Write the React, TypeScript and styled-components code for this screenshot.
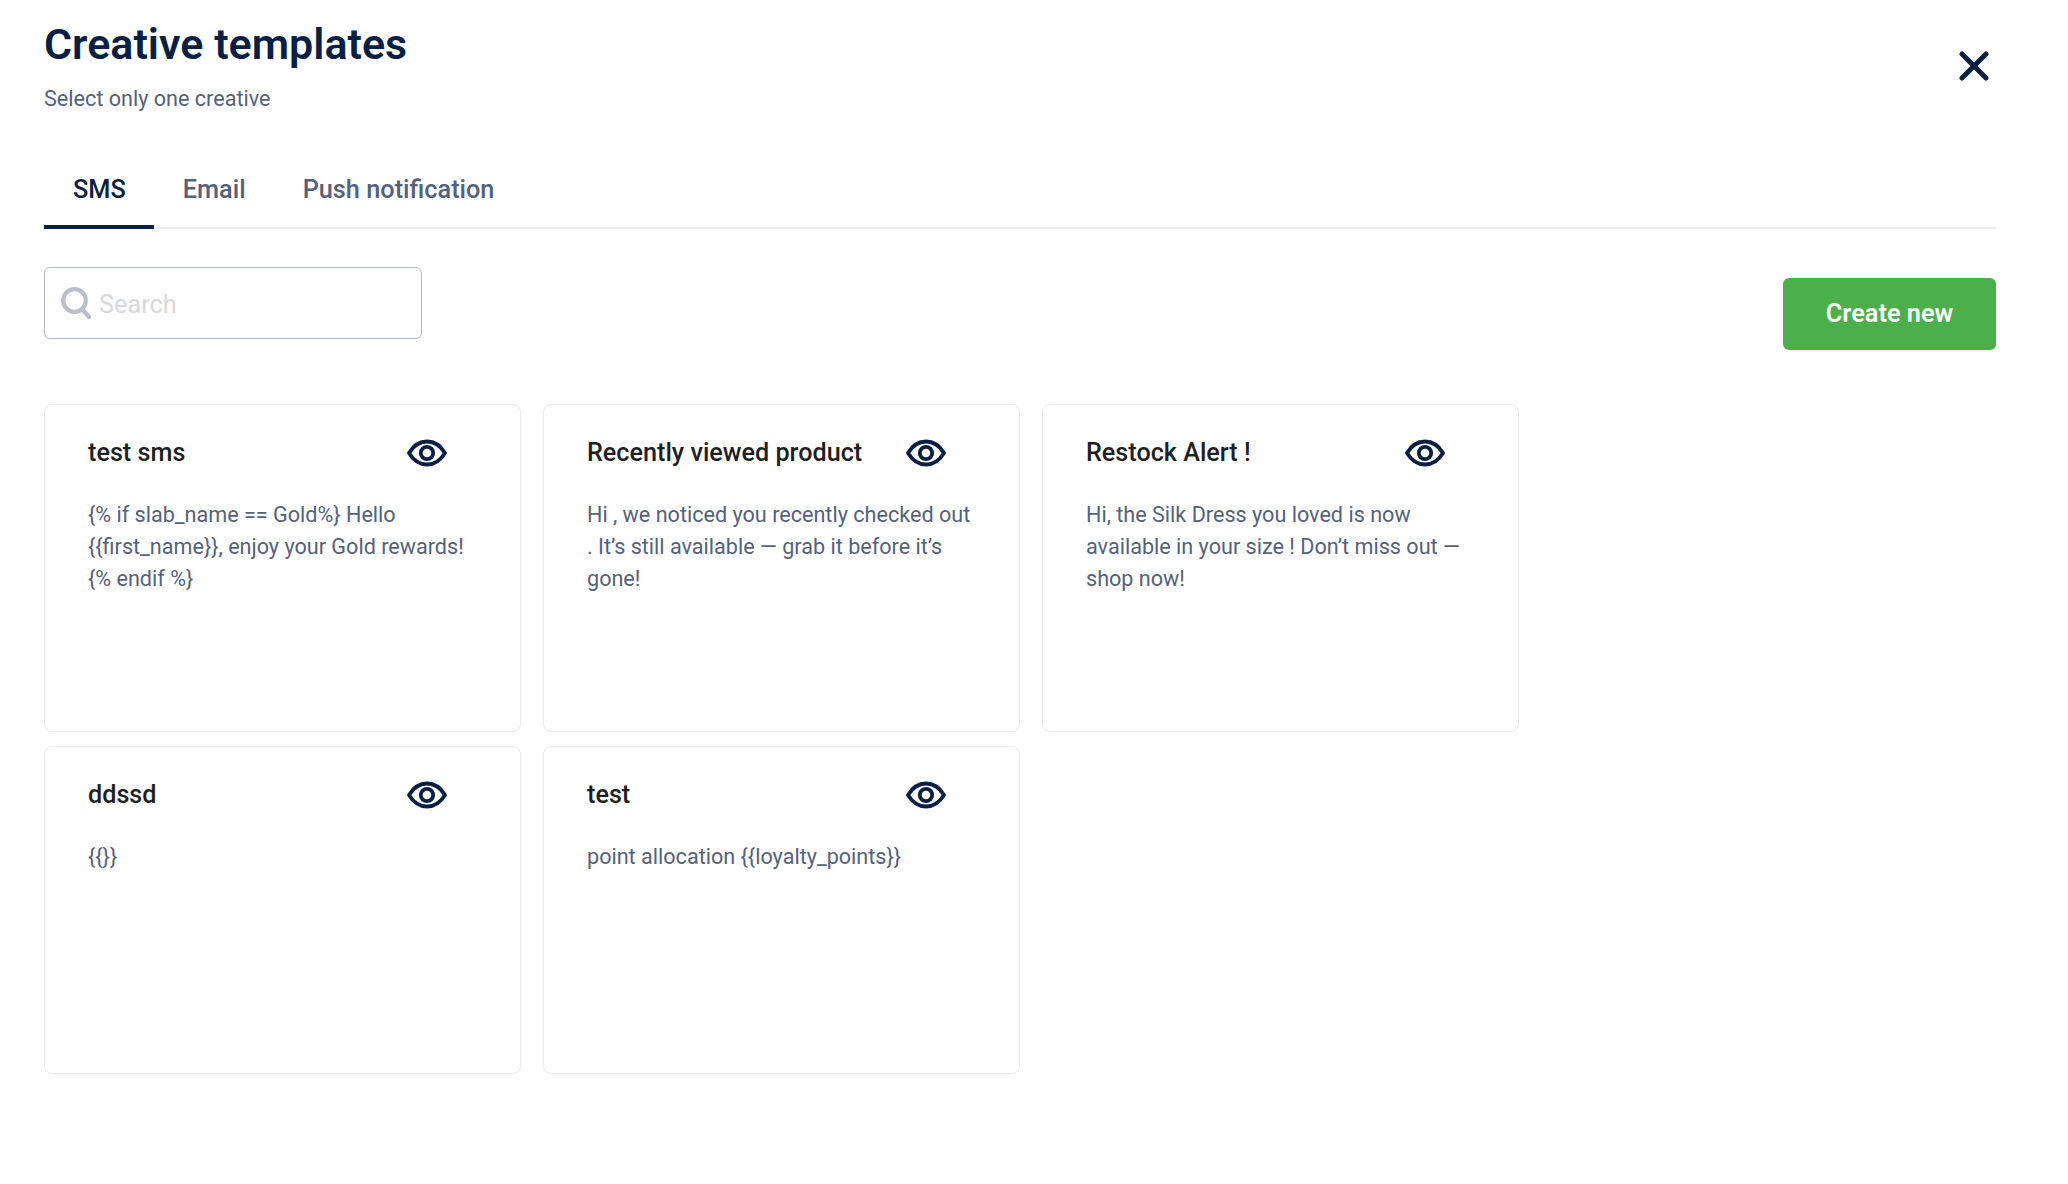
import { useState } from 'react';
import styled, { createGlobalStyle } from 'styled-components';

const GlobalStyle = createGlobalStyle`
  html, body {
    margin: 0;
    background: #fff;
    font-family: Roboto, "Noto Sans", sans-serif;
  }
`;

const Page = styled.div`
  width: 2068px;
  height: 1184px;
  box-sizing: border-box;
  padding: 17px 72px 0 44px;
  overflow: hidden;
`;

const Header = styled.div`
  display: flex;
  justify-content: space-between;
  align-items: flex-start;
`;

const Title = styled.h1`
  margin: 0;
  font-size: 43px;
  line-height: 54px;
  font-weight: 600;
  color: #0a1f44;
`;

const Subtitle = styled.p`
  margin: 15px 0 0;
  font-size: 21.6px;
  line-height: 26px;
  color: #53627c;
`;

const CloseButton = styled.button`
  display: flex;
  margin: 34px 7px 0 0;
  padding: 0;
  border: none;
  background: none;
  color: #0a1f44;
`;

const TabBar = styled.div`
  display: flex;
  margin-top: 46px;
  border-bottom: 2px solid #eceef0;
`;

const Tab = styled.button<{ $active?: boolean }>`
  padding: 17px 28px 20px 29px;
  margin-bottom: -2px;
  border: none;
  border-bottom: 4px solid ${({ $active }) => ($active ? '#0a1f44' : 'transparent')};
  background: none;
  font-family: inherit;
  font-size: 25.3px;
  line-height: 30px;
  font-weight: 500;
  color: ${({ $active }) => ($active ? '#0a1f44' : '#53627c')};
`;

const Toolbar = styled.div`
  display: flex;
  justify-content: space-between;
  align-items: flex-start;
  margin-top: 38px;
`;

const SearchBox = styled.label`
  display: flex;
  align-items: center;
  gap: 8px;
  width: 378px;
  height: 72px;
  box-sizing: border-box;
  padding: 0 16px;
  border: 1px solid #b0b7c6;
  border-radius: 6px;
  color: #b8bfcc;
`;

const SearchInput = styled.input`
  flex: 1;
  min-width: 0;
  border: none;
  outline: none;
  padding: 2px 0 0;
  font-family: inherit;
  font-size: 25.3px;
  color: #0a1f44;

  &::placeholder {
    color: #d6d8dc;
    opacity: 1;
  }
`;

const CreateButton = styled.button`
  width: 213px;
  height: 72px;
  margin-top: 11px;
  padding: 0 0 1px;
  border: none;
  border-radius: 6px;
  background: #4bb04a;
  color: #fff;
  font-family: inherit;
  font-size: 25.3px;
  font-weight: 600;
`;

const CardGrid = styled.div`
  display: grid;
  grid-template-columns: repeat(3, 477px);
  grid-auto-rows: 328px;
  column-gap: 22px;
  row-gap: 14px;
  margin-top: 54px;
`;

const Card = styled.div`
  box-sizing: border-box;
  padding: 30px 43px;
  border: 1px solid #e8eaed;
  border-radius: 8px;
`;

const CardHead = styled.div`
  display: flex;
  justify-content: space-between;
  align-items: center;
  height: 36px;
  padding-right: 30px;
`;

const CardTitle = styled.h3`
  margin: 0;
  font-size: 25.2px;
  line-height: 36px;
  font-weight: 500;
  color: #1d1f24;
`;

const EyeButton = styled.button`
  display: flex;
  padding: 0;
  border: none;
  background: none;
  color: #0a1f44;
`;

const CardBody = styled.p`
  margin: 28px 0 0;
  font-size: 21.6px;
  line-height: 32px;
  color: #53627c;
`;

const EyeIcon = () => (
  <svg width="40" height="28" viewBox="0 0 40 28" fill="none" stroke="currentColor" strokeWidth="3.8" strokeLinejoin="round">
    <path d="M2 14C6.5 6.5 12.5 2.5 20 2.5S33.5 6.5 38 14C33.5 21.5 27.5 25.5 20 25.5S6.5 21.5 2 14Z" />
    <circle cx="20" cy="14" r="6.2" />
  </svg>
);

const CloseIcon = () => (
  <svg width="30" height="30" viewBox="0 0 30 30" fill="none" stroke="currentColor" strokeWidth="5" strokeLinecap="round">
    <path d="M3 3L27 27M27 3L3 27" />
  </svg>
);

const SearchIcon = () => (
  <svg width="30" height="32" viewBox="0 0 30 32" fill="none" stroke="currentColor" strokeWidth="4.2" strokeLinecap="round">
    <circle cx="13.5" cy="13.5" r="11.3" />
    <path d="M21.5 22.5L28 30" />
  </svg>
);

const tabs = ['SMS', 'Email', 'Push notification'];

const templates = [
  {
    title: 'test sms',
    body: '{% if slab_name == Gold%} Hello {{first_name}}, enjoy your Gold rewards! {% endif %}',
  },
  {
    title: 'Recently viewed product',
    body: 'Hi , we noticed you recently checked out . It’s still available — grab it before it’s gone!',
  },
  {
    title: 'Restock Alert !',
    body: 'Hi, the Silk Dress you loved is now available in your size ! Don’t miss out — shop now!',
  },
  { title: 'ddssd', body: '{{}}' },
  { title: 'test', body: 'point allocation {{loyalty_points}}' },
];

export default function App() {
  const [activeTab, setActiveTab] = useState('SMS');

  return (
    <Page>
      <GlobalStyle />
      <Header>
        <div>
          <Title>Creative templates</Title>
          <Subtitle>Select only one creative</Subtitle>
        </div>
        <CloseButton aria-label="Close">
          <CloseIcon />
        </CloseButton>
      </Header>
      <TabBar>
        {tabs.map(tab => (
          <Tab key={tab} $active={tab === activeTab} onClick={() => setActiveTab(tab)}>
            {tab}
          </Tab>
        ))}
      </TabBar>
      <Toolbar>
        <SearchBox>
          <SearchIcon />
          <SearchInput placeholder="Search" />
        </SearchBox>
        <CreateButton>Create new</CreateButton>
      </Toolbar>
      <CardGrid>
        {templates.map(template => (
          <Card key={template.title}>
            <CardHead>
              <CardTitle>{template.title}</CardTitle>
              <EyeButton aria-label="Preview">
                <EyeIcon />
              </EyeButton>
            </CardHead>
            <CardBody>{template.body}</CardBody>
          </Card>
        ))}
      </CardGrid>
    </Page>
  );
}
